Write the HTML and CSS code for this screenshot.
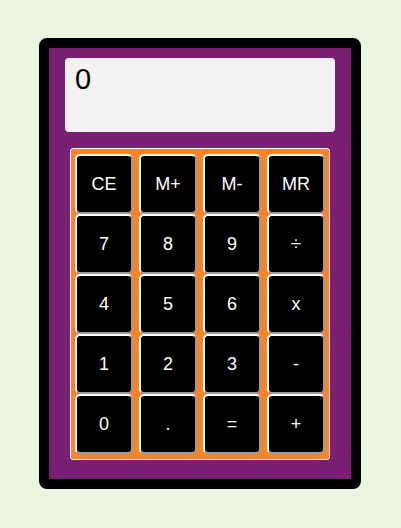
FILE: index.html
```html
<!DOCTYPE html>
<html>
<head>
<meta charset="utf-8">
<link rel="stylesheet" href="styles.css">
</head>
<body>
<div class="calc">
  <div class="display">0</div>
  <div class="keypad">
    <button class="key">CE</button>
    <button class="key">M+</button>
    <button class="key">M-</button>
    <button class="key">MR</button>
    <button class="key">7</button>
    <button class="key">8</button>
    <button class="key">9</button>
    <button class="key">÷</button>
    <button class="key">4</button>
    <button class="key">5</button>
    <button class="key">6</button>
    <button class="key">x</button>
    <button class="key">1</button>
    <button class="key">2</button>
    <button class="key">3</button>
    <button class="key">-</button>
    <button class="key">0</button>
    <button class="key">.</button>
    <button class="key">=</button>
    <button class="key">+</button>
  </div>
</div>
</body>
</html>
```
FILE: styles.css
```css
html, body {
  margin: 0;
  padding: 0;
  background: #ebf5df;
  font-family: "Liberation Sans", Arial, sans-serif;
}
body {
  padding-top: 38px;
  padding-left: 39px;
}
.calc {
  box-sizing: border-box;
  width: 322px;
  height: 451px;
  background: #7b1f73;
  border: 10px solid #000;
  border-radius: 8px;
  padding-top: 10px;
  display: flex;
  flex-direction: column;
  align-items: center;
}
.display {
  box-sizing: border-box;
  width: 270px;
  height: 74px;
  background: #f2f2f2;
  border-radius: 4px;
  padding: 5px 10px;
  font-size: 29px;
  color: #000;
  text-align: left;
}
.keypad {
  box-sizing: border-box;
  margin-top: 16px;
  width: 260px;
  height: 312px;
  background: #ff8224;
  border: 1px solid #fff;
  border-radius: 3px;
  padding: 5px 4px;
  display: grid;
  grid-template-columns: repeat(4, 58px);
  grid-auto-rows: 60px;
  column-gap: 6px;
  row-gap: 0;
}
.key {
  box-sizing: border-box;
  margin: 0;
  padding: 0;
  background: #000;
  color: #fff;
  font-family: "Liberation Sans", Arial, sans-serif;
  font-size: 18px;
  border: 2px solid;
  border-color: #fff #9a9a9a #9a9a9a #fff;
  border-radius: 5px;
  width: 58px;
  height: 60px;
}
```
